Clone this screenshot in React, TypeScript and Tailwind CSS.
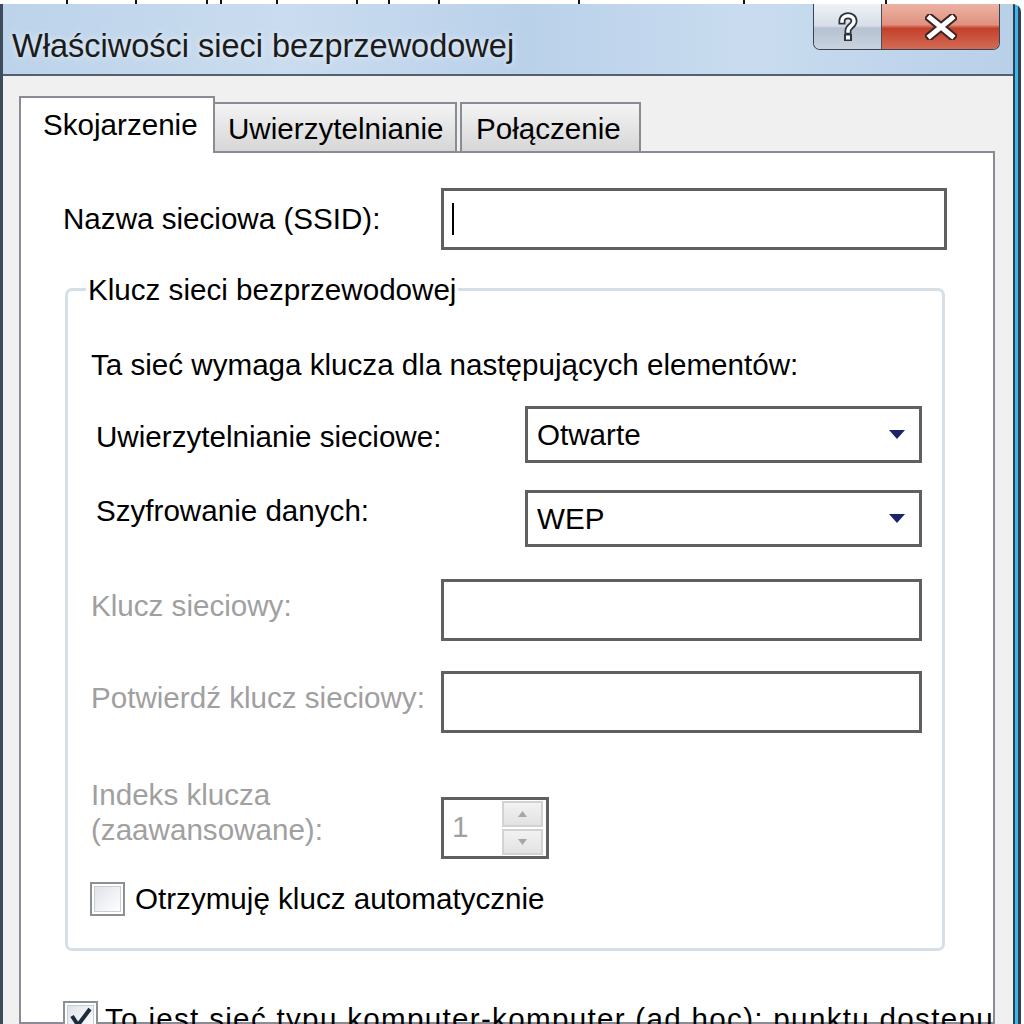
import React from 'react';

const TOP_LINES = [68, 69, 71, 14, 56, 80, 32, 50, 140, 165, 142];

function TopStrip() {
  return (
    <div className="flex h-[4px] shrink-0 bg-white">
      {TOP_LINES.map((w, i) => (
        <div key={i} className="h-full border-r-2 border-[#111]" style={{ width: w }} />
      ))}
    </div>
  );
}

function HelpGlyph() {
  return (
    <svg width="22" height="30" viewBox="0 0 22 30">
      <path d="M5 9 C5 2 17 2 17 9 C17 14 11 14 11 19" fill="none" stroke="#2d3440" strokeWidth="7" strokeLinecap="square" />
      <rect x="7" y="22" width="8" height="7" fill="#2d3440" />
      <path d="M5 9 C5 2 17 2 17 9 C17 14 11 14 11 19" fill="none" stroke="#fff" strokeWidth="3.5" strokeLinecap="square" />
      <rect x="9" y="23.5" width="4" height="4" fill="#fff" />
    </svg>
  );
}

function CloseGlyph() {
  return (
    <svg width="32" height="26" viewBox="0 0 32 26">
      <path d="M5 4 L27 22 M27 4 L5 22" stroke="#3a2626" strokeWidth="9" strokeLinecap="square" />
      <path d="M5 4 L27 22 M27 4 L5 22" stroke="#fff" strokeWidth="5" strokeLinecap="square" />
    </svg>
  );
}

function TitleBar() {
  return (
    <div className="flex h-[72px] shrink-0 items-start border-b-2 border-[#55606e] bg-[linear-gradient(to_right,#bcd3ea_0%,#cadcef_28%,#bad1ea_52%,#c9dcef_74%,#b9d0e9_100%)]">
      <div className="pl-[9px] pt-[22px] text-[32.5px] leading-[40px] text-[#1b1b1b] [text-shadow:0_0_6px_rgba(255,255,255,0.8)]">
        Właściwości sieci bezprzewodowej
      </div>
      <div className="ml-auto mr-[13px] flex h-[46px] overflow-hidden rounded-b-[7px] border-[1.5px] border-t-0 border-[#3b4350]">
        <div className="flex w-[68px] items-center justify-center border-r-[1.5px] border-[#4a4f5a] bg-[linear-gradient(to_bottom,#eef2f6_0%,#d7dee7_48%,#b5c2d1_54%,#c8d3df_100%)]">
          <HelpGlyph />
        </div>
        <div className="flex w-[117px] items-center justify-center bg-[linear-gradient(to_bottom,#ecb3a5_0%,#e0917f_46%,#c3402a_54%,#d26b55_100%)]">
          <CloseGlyph />
        </div>
      </div>
    </div>
  );
}

function Tabs() {
  return (
    <div className="relative z-10 -mb-[2px] flex h-[57px] shrink-0 items-end">
      <div className="h-[57px] w-[196px] border-2 border-b-0 border-[#898c95] bg-white pl-[22px] pt-[9px] text-[29.6px] leading-[36px]">
        Skojarzenie
      </div>
      <div className="mb-[2px] h-[49px] w-[242px] border-2 border-b-0 border-l-0 border-[#898c95] bg-[linear-gradient(to_bottom,#f4f4f4,#d6d6d6)] pl-[13px] pt-[7px] text-[29.6px] leading-[36px]">
        Uwierzytelnianie
      </div>
      <div className="mb-[2px] ml-[3px] h-[49px] w-[181px] border-2 border-b-0 border-[#898c95] bg-[linear-gradient(to_bottom,#f4f4f4,#d6d6d6)] pl-[14px] pt-[7px] text-[29.6px] leading-[36px]">
        Połączenie
      </div>
    </div>
  );
}

function DropArrow() {
  return (
    <svg width="16" height="9" viewBox="0 0 16 9" className="ml-auto mr-[14px]">
      <path d="M0 0 H16 L8 9 Z" fill="#1a2466" />
    </svg>
  );
}

function Select({ value }: { value: string }) {
  return (
    <div className="flex h-[57px] w-[397px] items-center border-[3px] border-[#606060] bg-white pl-[9px] text-[29.6px] leading-[36px]">
      <span>{value}</span>
      <DropArrow />
    </div>
  );
}

function TextBox({ width }: { width: string }) {
  return <div className={`h-[62px] border-[3px] border-[#606060] bg-white ${width}`} />;
}

function SpinArrow({ up }: { up?: boolean }) {
  return (
    <svg width="9" height="6" viewBox="0 0 9 6">
      <path d={up ? 'M0 6 H9 L4.5 0 Z' : 'M0 0 H9 L4.5 6 Z'} fill="#a6a6a6" />
    </svg>
  );
}

function Spinner() {
  return (
    <div className="mt-[20px] flex h-[62px] w-[108px] border-[3px] border-[#606060] bg-white">
      <div className="pl-[8px] pt-[9px] text-[29.6px] leading-[36px] text-[#a0a0a0]">1</div>
      <div className="ml-auto mr-[3px] mt-[1px] flex flex-col gap-[2px]">
        <div className="flex h-[26px] w-[41px] items-center justify-center border-2 border-[#d2d2d2] bg-[linear-gradient(to_bottom,#f2f2f2,#e2e2e2)]">
          <SpinArrow up />
        </div>
        <div className="flex h-[26px] w-[41px] items-center justify-center border-2 border-[#d2d2d2] bg-[linear-gradient(to_bottom,#f2f2f2,#e2e2e2)]">
          <SpinArrow />
        </div>
      </div>
    </div>
  );
}

function CheckBox({ checked }: { checked?: boolean }) {
  return (
    <div className="flex h-[34px] w-[35px] shrink-0 items-center justify-center border-2 border-[#8e8f8f] bg-white">
      <div className="flex h-[26px] w-[27px] items-center justify-center border border-[#c6ced6] bg-[linear-gradient(135deg,#dfe3e8,#ffffff)]">
        {checked && (
          <svg width="24" height="22" viewBox="0 0 24 22">
            <path d="M3 9 L9 18 L21 2" fill="none" stroke="#1d2b3a" strokeWidth="4" />
          </svg>
        )}
      </div>
    </div>
  );
}

function GroupBox() {
  return (
    <div className="relative ml-[44px] mt-[38px] h-[663px] w-[880px] shrink-0 rounded-[7px] border-[3px] border-[#d6dfe6] text-[29.6px] leading-[36px]">
      <div className="absolute -top-[19px] left-[18px] bg-white px-[2px]">Klucz sieci bezprzewodowej</div>

      <div className="mt-[56px] h-[36px] pl-[23px]">Ta sieć wymaga klucza dla następujących elementów:</div>

      <div className="mt-[23px] flex h-[57px] items-start pl-[28px]">
        <div className="mt-[13px] w-[429px]">Uwierzytelnianie sieciowe:</div>
        <Select value="Otwarte" />
      </div>

      <div className="mt-[27px] flex h-[57px] items-start pl-[28px]">
        <div className="mt-[3px] w-[429px]">Szyfrowanie danych:</div>
        <Select value="WEP" />
      </div>

      <div className="mt-[32px] flex h-[62px] items-start pl-[23px]">
        <div className="mt-[9px] w-[350px] text-[#a0a0a0]">Klucz sieciowy:</div>
        <TextBox width="w-[481px]" />
      </div>

      <div className="mt-[30px] flex h-[62px] items-start pl-[23px]">
        <div className="mt-[9px] w-[350px] text-[#a0a0a0]">Potwierdź klucz sieciowy:</div>
        <TextBox width="w-[481px]" />
      </div>

      <div className="mt-[44px] flex items-start pl-[23px]">
        <div className="w-[350px] leading-[35px] text-[#a0a0a0]">
          Indeks klucza
          <br />
          (zaawansowane):
        </div>
        <Spinner />
      </div>

      <div className="mt-[23px] flex h-[34px] items-center pl-[22px]">
        <CheckBox />
        <span className="ml-[10px]">Otrzymuję klucz automatycznie</span>
      </div>
    </div>
  );
}

function Panel() {
  return (
    <div className="flex min-h-0 flex-1 flex-col border-2 border-[#898c95] bg-white text-black">
      <div className="mt-[35px] flex h-[62px] shrink-0 items-center pl-[42px] text-[29.6px] leading-[36px]">
        <div className="w-[378px]">Nazwa sieciowa (SSID):</div>
        <div className="flex h-[62px] w-[506px] items-center border-[3px] border-[#606060] bg-white">
          <div className="ml-[8px] h-[32px] w-[2px] bg-black" />
        </div>
      </div>

      <GroupBox />

      <div className="mt-[50px] flex shrink-0 items-start whitespace-nowrap pl-[42px] text-[29.6px] leading-[36px]">
        <CheckBox checked />
        <span className="ml-[7px] tracking-[1.3px]">To jest sieć typu komputer-komputer (ad hoc); punktu dostępu</span>
      </div>
    </div>
  );
}

export default function App() {
  return (
    <div className="flex h-[1024px] w-[1024px] flex-col overflow-hidden bg-white font-['Liberation_Sans',Arial,sans-serif] text-black">
      <TopStrip />
      <div className="flex min-h-0 flex-1">
        <div className="flex w-[1013px] flex-col border-l-[3px] border-[#3d4b5c]">
          <TitleBar />
          <div className="flex min-h-0 flex-1 flex-col overflow-hidden bg-[#f0f0f0] pl-[16px] pr-[18px] pt-[20px]">
            <Tabs />
            <Panel />
          </div>
        </div>
        <div className="w-[8px] rounded-tr-[8px] bg-[linear-gradient(to_right,#2f3f52_0px,#2f3f52_2px,#3cb8ea_2px,#3cb8ea_5px,#2f3f52_5px,#2f3f52_8px)]" />
      </div>
    </div>
  );
}
